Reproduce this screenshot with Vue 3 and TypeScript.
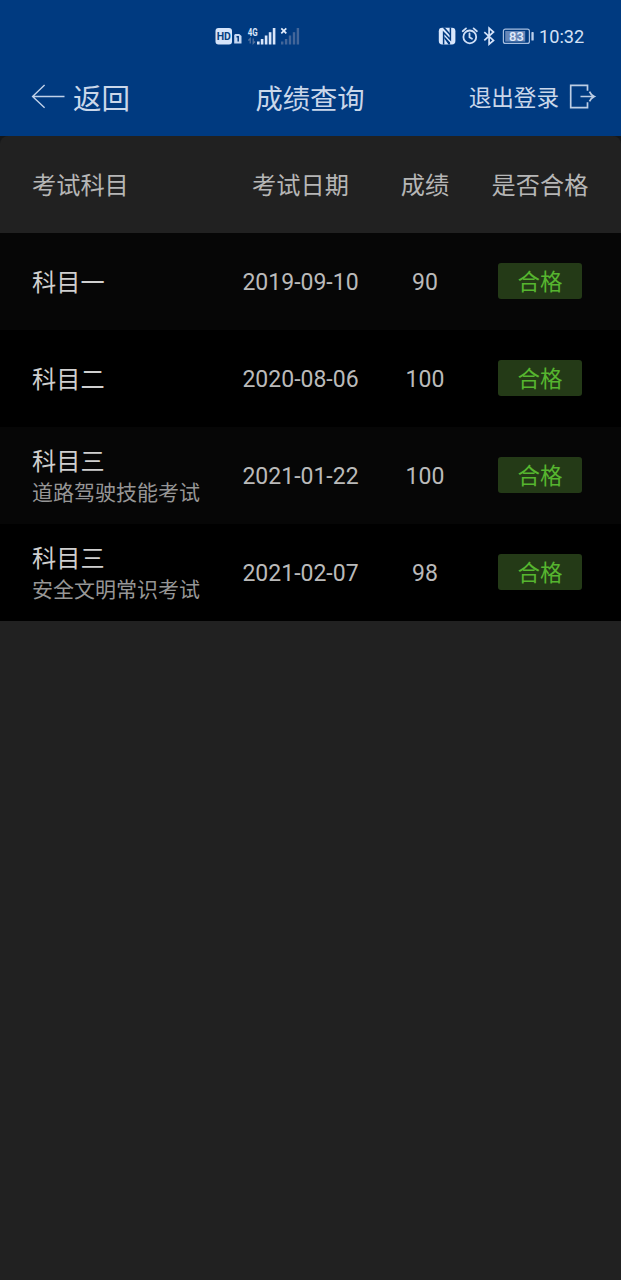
<script setup lang="ts">
interface ExamRecord {
  subject: string
  detail?: string
  date: string
  score: number
  result: string
}

const columns: string[] = ['考试科目', '考试日期', '成绩', '是否合格']

const records: ExamRecord[] = [
  { subject: '科目一', date: '2019-09-10', score: 90, result: '合格' },
  { subject: '科目二', date: '2020-08-06', score: 100, result: '合格' },
  { subject: '科目三', detail: '道路驾驶技能考试', date: '2021-01-22', score: 100, result: '合格' },
  { subject: '科目三', detail: '安全文明常识考试', date: '2021-02-07', score: 98, result: '合格' },
]
</script>

<template>
  <div class="screen">
    <header class="top">
      <div class="status">
        <svg class="network" width="86" height="20" viewBox="0 0 86 20">
          <rect x="0.5" y="2" width="16.5" height="16.5" rx="3" fill="#d5e4fa" />
          <text x="8.8" y="14.1" class="hd">HD</text>
          <path d="M20.2 8h4l2.3 2V17.5H19.2V9z" fill="#c5d7f2" />
          <path d="M21.5 10.7h1.7V15.6" fill="none" stroke="#003a80" stroke-width="1.5" />
          <text x="32.8" y="9.5" class="gen" textLength="10" lengthAdjust="spacingAndGlyphs">4G</text>
          <path d="M35.2 17.5v-5l-1.8 2M38.2 12.5v5l1.8-2" fill="none" stroke="#55749f" stroke-width="1.2" />
          <g fill="#d9e6fa">
            <rect x="42" y="15.5" width="2.6" height="3" />
            <rect x="45.8" y="13" width="2.6" height="5.5" />
            <rect x="49.8" y="9.5" width="2.6" height="9" />
            <rect x="53.8" y="6.2" width="2.6" height="12.3" />
            <rect x="57.8" y="2" width="2.6" height="16.5" />
          </g>
          <path d="M66.3 2.3l5 5M71.3 2.3l-5 5" stroke="#e3edfc" stroke-width="1.7" />
          <g fill="#436699">
            <rect x="66" y="15.5" width="2.4" height="3" />
            <rect x="69.9" y="13" width="2.4" height="5.5" />
            <rect x="73.8" y="9.5" width="2.4" height="9" />
            <rect x="77.8" y="6.2" width="2.4" height="12.3" />
            <rect x="81.7" y="2" width="2.4" height="16.5" />
          </g>
        </svg>
        <svg class="device" width="98" height="20" viewBox="0 0 98 20">
          <rect x="0.8" y="1.8" width="16.6" height="16.6" rx="3.4" fill="#d9e7fc" />
          <path d="M5.6 18.6V6.6l6.8 7V1.6" fill="none" stroke="#003a80" stroke-width="1.5" />
          <path d="M4.6 1.6h2.2l5.600 6.200v2.200zM6.300 10.200l5.800 6.200v2.200h-1.600L6.300 12.600z" fill="#003a80" />
          <g fill="none" stroke="#d0e0f7" stroke-width="1.8" stroke-linecap="round">
            <circle cx="31.8" cy="10.9" r="6.4" />
            <path d="M31.5 7.5v3.8l2.5 1.5M24.7 5.2l3.3-2.8M38.9 5.2l-3.3-2.8" />
          </g>
          <path d="M46.3 6.2l9.2 8.2-4.4 3.7V2.2l4.4 3.8-9.2 8.4" fill="none" stroke="#d5e3f9" stroke-width="1.7" />
          <rect x="65.4" y="3.2" width="26" height="14.2" rx="2" fill="none" stroke="#a6bedf" stroke-width="1.2" />
          <rect x="67.2" y="5" width="20" height="10.6" fill="#6686b7" />
          <text x="78.4" y="14.9" class="charge">83</text>
          <rect x="93.4" y="6" width="2.3" height="8.6" rx=".7" fill="#bccfea" />
        </svg>
        <span class="clock">10:32</span>
      </div>
      <nav class="nav">
        <div class="back">
          <svg width="34" height="26" viewBox="0 0 34 26">
            <path d="M13.6 2L1.6 13.500l12 11.2M1.6 13.500H33.500" fill="none" stroke="#c0d1e9" stroke-width="1.4" />
          </svg>
          <span>返回</span>
        </div>
        <h1 class="title">成绩查询</h1>
        <div class="logout">
          <span>退出登录</span>
          <svg width="28" height="26" viewBox="0 0 28 26">
            <path d="M18.5 7.8V2.3H1.7V24.700H18.5V19.200M11.500 13.500h14M20.500 8.600q1.200 3.200 4.800 4.900-3.600 1.700-4.800 4.900" fill="none" stroke="#bccde4" stroke-width="1.7" />
          </svg>
        </div>
      </nav>
    </header>
    <main class="body">
      <div class="row head">
        <span v-for="name in columns" :key="name">{{ name }}</span>
      </div>
      <div v-for="item in records" :key="item.date" class="row record">
        <div class="subject">
          <div class="name">{{ item.subject }}</div>
          <div v-if="item.detail" class="detail">{{ item.detail }}</div>
        </div>
        <span class="num">{{ item.date }}</span>
        <span class="num">{{ item.score }}</span>
        <span class="badge">{{ item.result }}</span>
      </div>
    </main>
  </div>
</template>

<style>
body {
  margin: 0;
  background: #212121;
}
</style>

<style scoped>
.screen {
  width: 621px;
  height: 1280px;
  overflow: hidden;
  background: #212121;
  font-family: Roboto, "Noto Sans CJK SC", sans-serif;
  font-weight: 400;
}
.top {
  height: 136px;
  background: #003a80;
  color: #cad7ea;
}
.status {
  display: flex;
  align-items: center;
  height: 20px;
  padding: 26px 0 0 215px;
}
.device {
  margin-left: 137px;
}
.clock {
  margin: 2px 0 0 3px;
  font-size: 18.2px;
  line-height: 22px;
  color: #d4e1f5;
}
.hd {
  font: 700 10.5px Roboto, sans-serif;
  fill: #07407f;
  text-anchor: middle;
}
.gen {
  font: 700 10.5px Roboto, sans-serif;
  fill: #d9e6fa;
}
.charge {
  font: 500 13px Roboto, sans-serif;
  fill: #e0ebfc;
  text-anchor: middle;
}
.nav {
  display: grid;
  grid-template-columns: 210px 200px 1fr;
  align-items: center;
  height: 50px;
  padding: 26px 24px 0 0;
  font-family: "Noto Sans CJK SC", sans-serif;
}
.back {
  display: flex;
  align-items: center;
  padding-left: 31px;
  gap: 8px;
  font-size: 28.5px;
  line-height: 40px;
}
.back svg,
.logout svg {
  margin-top: -3px;
}
.title {
  margin: 0;
  font-size: 27.3px;
  font-weight: 400;
  line-height: 40px;
  text-align: center;
}
.logout {
  display: flex;
  align-items: center;
  justify-content: flex-end;
  gap: 10px;
  font-size: 22.6px;
  line-height: 36px;
}
.body {
  background: #151719;
}
.row {
  display: grid;
  grid-template-columns: 194px 149px 100px 130px;
  align-items: center;
  justify-items: center;
  height: 97px;
  padding-left: 32px;
  font-size: 24.2px;
}
.row > :first-child {
  justify-self: start;
}
.head {
  border-radius: 8px 8px 0 0;
  background: #212121;
  color: #b6b6b6;
  font-family: "Noto Sans CJK SC", sans-serif;
}
.head span {
  padding-bottom: 2px;
}
.record {
  background: #000;
}
.record:nth-child(even) {
  background: #060606;
}
.subject {
  padding-bottom: 2px;
  font-family: "Noto Sans CJK SC", sans-serif;
}
.name {
  line-height: 34px;
  color: #cfcfcf;
}
.detail {
  margin-top: -1px;
  padding-bottom: 1px;
  font-size: 21px;
  line-height: 30px;
  color: #969696;
}
.num {
  padding-top: 2px;
  font-size: 23px;
  line-height: 30px;
  color: #bababa;
}
.badge {
  width: 84px;
  height: 36px;
  margin-bottom: 1px;
  border-radius: 3px;
  background: #243a17;
  color: #56b52f;
  font-family: "Noto Sans CJK SC", sans-serif;
  font-size: 22.5px;
  line-height: 35px;
  text-align: center;
}
</style>
